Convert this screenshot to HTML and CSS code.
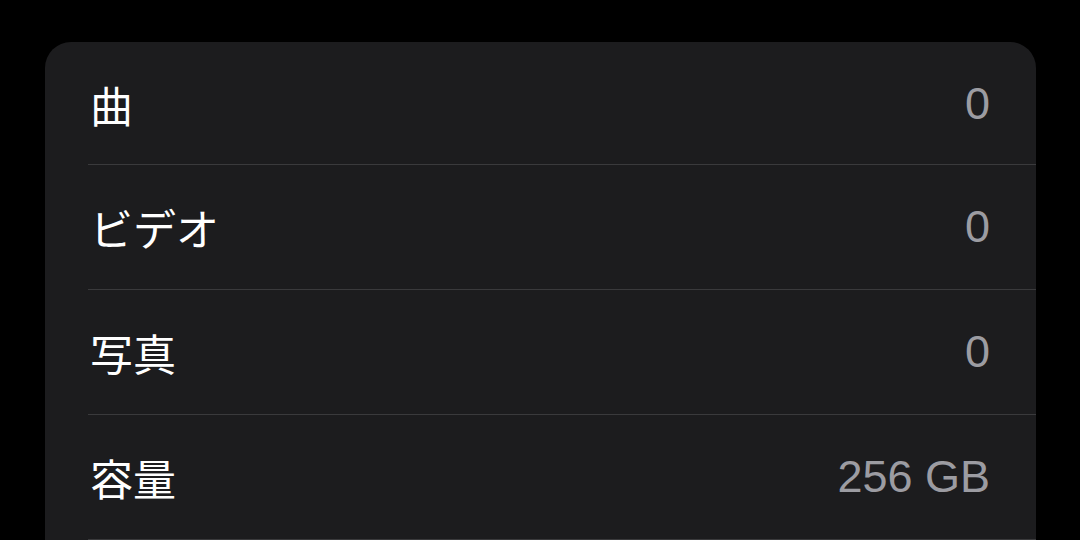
FILE: index.html
```html
<!doctype html>
<html lang="ja">
<head>
<meta charset="UTF-8">
<meta name="viewport" content="width=device-width, initial-scale=1.0">
<title>情報</title>
<link rel="stylesheet" href="styles.css">
</head>
<body>
<div class="card">
<div class="row"><span class="label">曲</span><span class="value">0</span></div>
<div class="row"><span class="label">ビデオ</span><span class="value">0</span></div>
<div class="row"><span class="label">写真</span><span class="value">0</span></div>
<div class="row"><span class="label">容量</span><span class="value">256 GB</span></div>
</div>
</body>
</html>
```
FILE: styles.css
```css
body {
margin: 0;
background: #000;
font-family: "Liberation Sans", "Noto Sans CJK JP", sans-serif;
height: 540px;
overflow: hidden;
}
.card {
margin: 42px 44px 0 45px;
background: #1c1c1e;
border-radius: 26px 26px 0 0;
padding-left: 43px;
}
.row {
display: flex;
justify-content: space-between;
align-items: center;
height: 124px;
border-bottom: 1px solid #3a3a3c;
padding-right: 46px;
}
.row:first-child {
box-sizing: border-box;
height: 123px;
padding-top: 2px;
}
.label {
color: #fff;
font-size: 43px;
margin-left: 2px;
font-family: "Noto Sans CJK JP", sans-serif;
}
.value {
color: #9c9ca2;
font-size: 45px;
}
```
